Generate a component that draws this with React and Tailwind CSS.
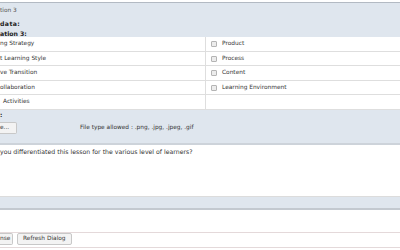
const rows = [
  { left: "ng Strategy", right: "Product" },
  { left: "t Learning Style", right: "Process" },
  { left: "ve Transition", right: "Content" },
  { left: "ollaboration", right: "Learning Environment" },
  { left: "Activities", right: null, indent: true },
];

const rowHeights = ["h-[15px]", "h-[14px]", "h-[15px]", "h-[14px]", "h-[15px]"];

function Checkbox() {
  return (
    <span className="inline-block w-[6px] h-[6px] border border-[#b4b4b4] bg-[#ececec] rounded-[1px]"></span>
  );
}

export default function App() {
  return (
    <div
      className="w-[400px] h-[250px] bg-white overflow-hidden text-[#333] text-[5.85px] leading-none"
      style={{ fontFamily: '"DejaVu Sans", Verdana, sans-serif' }}
    >
      <div className="mt-[2px] border-t border-[#b3bac3]"></div>

      {/* header */}
      <div className="h-[34px] bg-[#dfe6ee] flex flex-col pt-[5px]">
        <span className="text-[#555]">tion 3</span>
        <span className="font-bold text-[#222] text-[6.2px] mt-[7px] tracking-[0.4px]">data:</span>
        <span className="font-bold text-[#222] text-[6.2px] mt-[4px]">ation 3:</span>
      </div>

      {/* table */}
      <div className="flex flex-col">
        {rows.map((r, i) => (
          <div key={i} className={`flex border-b border-[#dedede] ${rowHeights[i]}`}>
            <div className={`w-[206px] flex items-center border-r border-[#dedede] ${r.indent ? "pl-[3px]" : ""}`}>
              {r.left}
            </div>
            <div className="flex-1 flex items-center pl-[5px] gap-[5px]">
              {r.right && (
                <>
                  <Checkbox />
                  <span>{r.right}</span>
                </>
              )}
            </div>
          </div>
        ))}
      </div>

      {/* upload */}
      <div className="h-[35px] bg-[#dfe6ee] border-b-2 border-[#cdd3da] flex flex-col pt-[3px]">
        <span className="font-bold text-[#222]">:</span>
        <div className="flex items-center mt-[3px]">
          <div className="w-[17px] h-[12px] bg-[#f3f3f3] border border-[#c8c8c8] rounded-r-[2px] border-l-0 flex items-center">
            e...
          </div>
          <span className="ml-[63px] mt-[1px]">File type allowed : .png, .jpg, .jpeg, .gif</span>
        </div>
      </div>

      {/* question */}
      <div className="h-[51px] pt-[4px] text-[6.2px]">
        <span>you differentiated this lesson for the various level of learners?</span>
      </div>

      <div className="border-t border-[#dcdcdc] h-[12px] bg-[#dfe6ee]"></div>
      <div className="border-t-2 border-[#c3c9d0] h-[24px]"></div>

      {/* buttons */}
      <div className="border-t border-[#e4d9da] flex gap-[4px] h-[16px] border-b border-[#c6ccd3]">
        <div className="h-[12px] w-[13px] bg-[#f3f3f3] border border-[#c8c8c8] border-l-0 rounded-r-[2px] flex items-center">
          nse
        </div>
        <div className="h-[12px] px-[5px] bg-[#f3f3f3] border border-[#c8c8c8] rounded-[2px] flex items-center">
          Refresh Dialog
        </div>
      </div>
    </div>
  );
}
